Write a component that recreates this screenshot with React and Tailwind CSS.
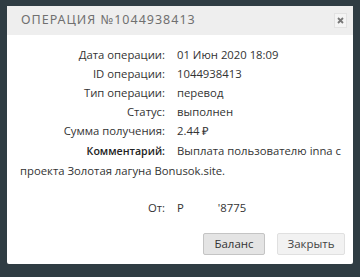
export default function App() {
  const rows = [
    ["Дата операции:", "01 Июн 2020 18:09"],
    ["ID операции:", "1044938413"],
    ["Тип операции:", "перевод"],
    ["Статус:", "выполнен"],
    ["Сумма получения:", "2.44 ₽"],
  ];
  return (
    <div className="w-[360px] h-[277px] bg-[#2f3c43] pt-[6px] pl-[7px] overflow-hidden" style={{ fontFamily: '"Open Sans", sans-serif' }}>
      <div className="w-[346px] h-[258px] bg-white rounded-[2px] flex flex-col">
        <div className="h-[29px] bg-[#eeeeee] flex items-center justify-between pl-[14px] pr-[6px]">
          <span className="text-[12.5px] tracking-[1px] text-[#707070]" style={{ fontFamily: '"Noto Sans", sans-serif' }}>ОПЕРАЦИЯ №1044938413</span>
          <div className="w-[13px] h-[15px] border border-[#e2e2e2] bg-[#f4f4f4] flex items-center justify-center">
            <svg width="7" height="7" viewBox="0 0 7 7"><path d="M1 1L6 6M6 1L1 6" stroke="#777" strokeWidth="1.8" /></svg>
          </div>
        </div>
        <div className="flex flex-col pt-[10px] text-[11.3px] text-[#333] leading-[19px]">
          {rows.map(([l, v]) => (
            <div key={l} className="flex">
              <span className="w-[158px] text-right">{l}</span>
              <span className="pl-[12px]">{v}</span>
            </div>
          ))}
          <p className="pl-[13px] pr-[6px] mt-[1px]">
            <span className="inline-block w-[145px] text-right font-semibold text-[10.6px] text-[#222]">Комментарий:</span>
            <span className="pl-[12px]">Выплата пользователю inna с проекта Золотая лагуна Bonusok.site.</span>
          </p>
          <div className="flex mt-[18px]">
            <span className="w-[158px] text-right">От:</span>
            <span className="pl-[12px]">Р<span className="inline-block w-[34px]"></span>'8775</span>
          </div>
        </div>
        <div className="flex justify-end gap-[12px] pr-[8px] mt-auto mb-[9px]">
          <button className="w-[62px] h-[22px] border border-[#c4c4c4] bg-[#e4e4e4] rounded-[2px] text-[11.5px] text-[#333]">Баланс</button>
          <button className="w-[68px] h-[22px] border border-[#e0e0e0] bg-[#f2f2f2] rounded-[2px] text-[11.5px] text-[#444]">Закрыть</button>
        </div>
      </div>
    </div>
  );
}
